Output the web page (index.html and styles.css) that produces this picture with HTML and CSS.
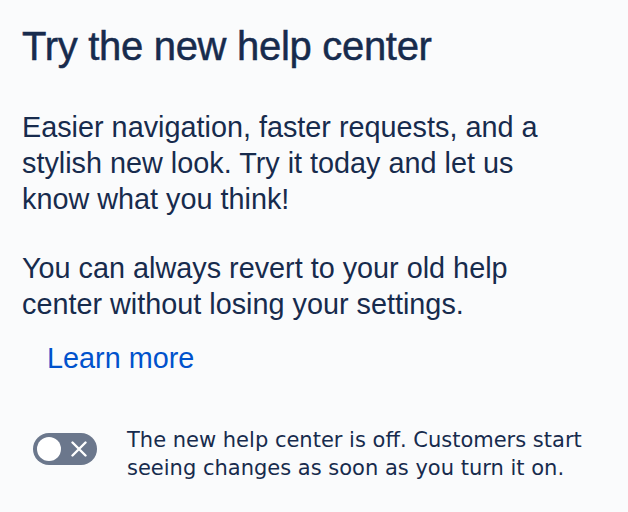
FILE: index.html
```html
<!DOCTYPE html>
<html>
<head>
<meta charset="utf-8">
<link rel="stylesheet" href="styles.css">
</head>
<body>
<div class="panel">
  <h1 class="title">Try the new help center</h1>
  <p class="text">Easier navigation, faster requests, and a stylish new look. Try it today and let us know what you think!</p>
  <p class="text">You can always revert to your old help center without losing your settings.</p>
  <a class="link" href="#">Learn more</a>
  <div class="toggle-row">
    <span class="toggle">
      <span class="knob"></span>
      <svg class="x" width="16" height="16" viewBox="0 0 16 16"><path d="M1.5 1.5L14.5 14.5M14.5 1.5L1.5 14.5" stroke="#fff" stroke-width="2.4" stroke-linecap="round"/></svg>
    </span>
    <p class="note">The new help center is off. Customers start seeing changes as soon as you turn it on.</p>
  </div>
</div>
</body>
</html>
```
FILE: styles.css
```css
html, body {
  margin: 0;
  padding: 0;
  background: #FAFBFC;
}
body {
  font-family: "Liberation Sans", Arial, sans-serif;
  color: #172B4D;
}
.panel {
  padding: 23px 22px 0 22px;
}
.title {
  margin: 0;
  font-size: 40px;
  font-weight: 400;
  line-height: 46px;
  letter-spacing: -0.3px;
  -webkit-text-stroke: 0.5px #172B4D;
}
.text {
  margin: 0;
  font-size: 28.8px;
  line-height: 36px;
  width: 560px;
}
.title + .text { margin-top: 40px; }
.text + .text { margin-top: 33px; }
.link {
  display: block;
  width: max-content;
  margin: 18px 0 0 25px;
  font-size: 28.8px;
  line-height: 36px;
  color: #0052CC;
  text-decoration: none;
}
.toggle-row {
  display: flex;
  align-items: flex-start;
  gap: 30px;
  margin: 50px 0 0 11px;
}
.toggle {
  flex: none;
  margin-top: 7px;
  width: 64px;
  height: 32px;
  border-radius: 16px;
  background: #6B778C;
  display: flex;
  align-items: center;
  justify-content: space-between;
  padding: 0 10px 0 4px;
  box-sizing: border-box;
}
.knob {
  width: 24px;
  height: 24px;
  border-radius: 50%;
  background: #fff;
}
.x { display: block; }
.note {
  margin: 0;
  font-family: "DejaVu Sans", Verdana, sans-serif;
  font-size: 21px;
  line-height: 28px;
}
```
